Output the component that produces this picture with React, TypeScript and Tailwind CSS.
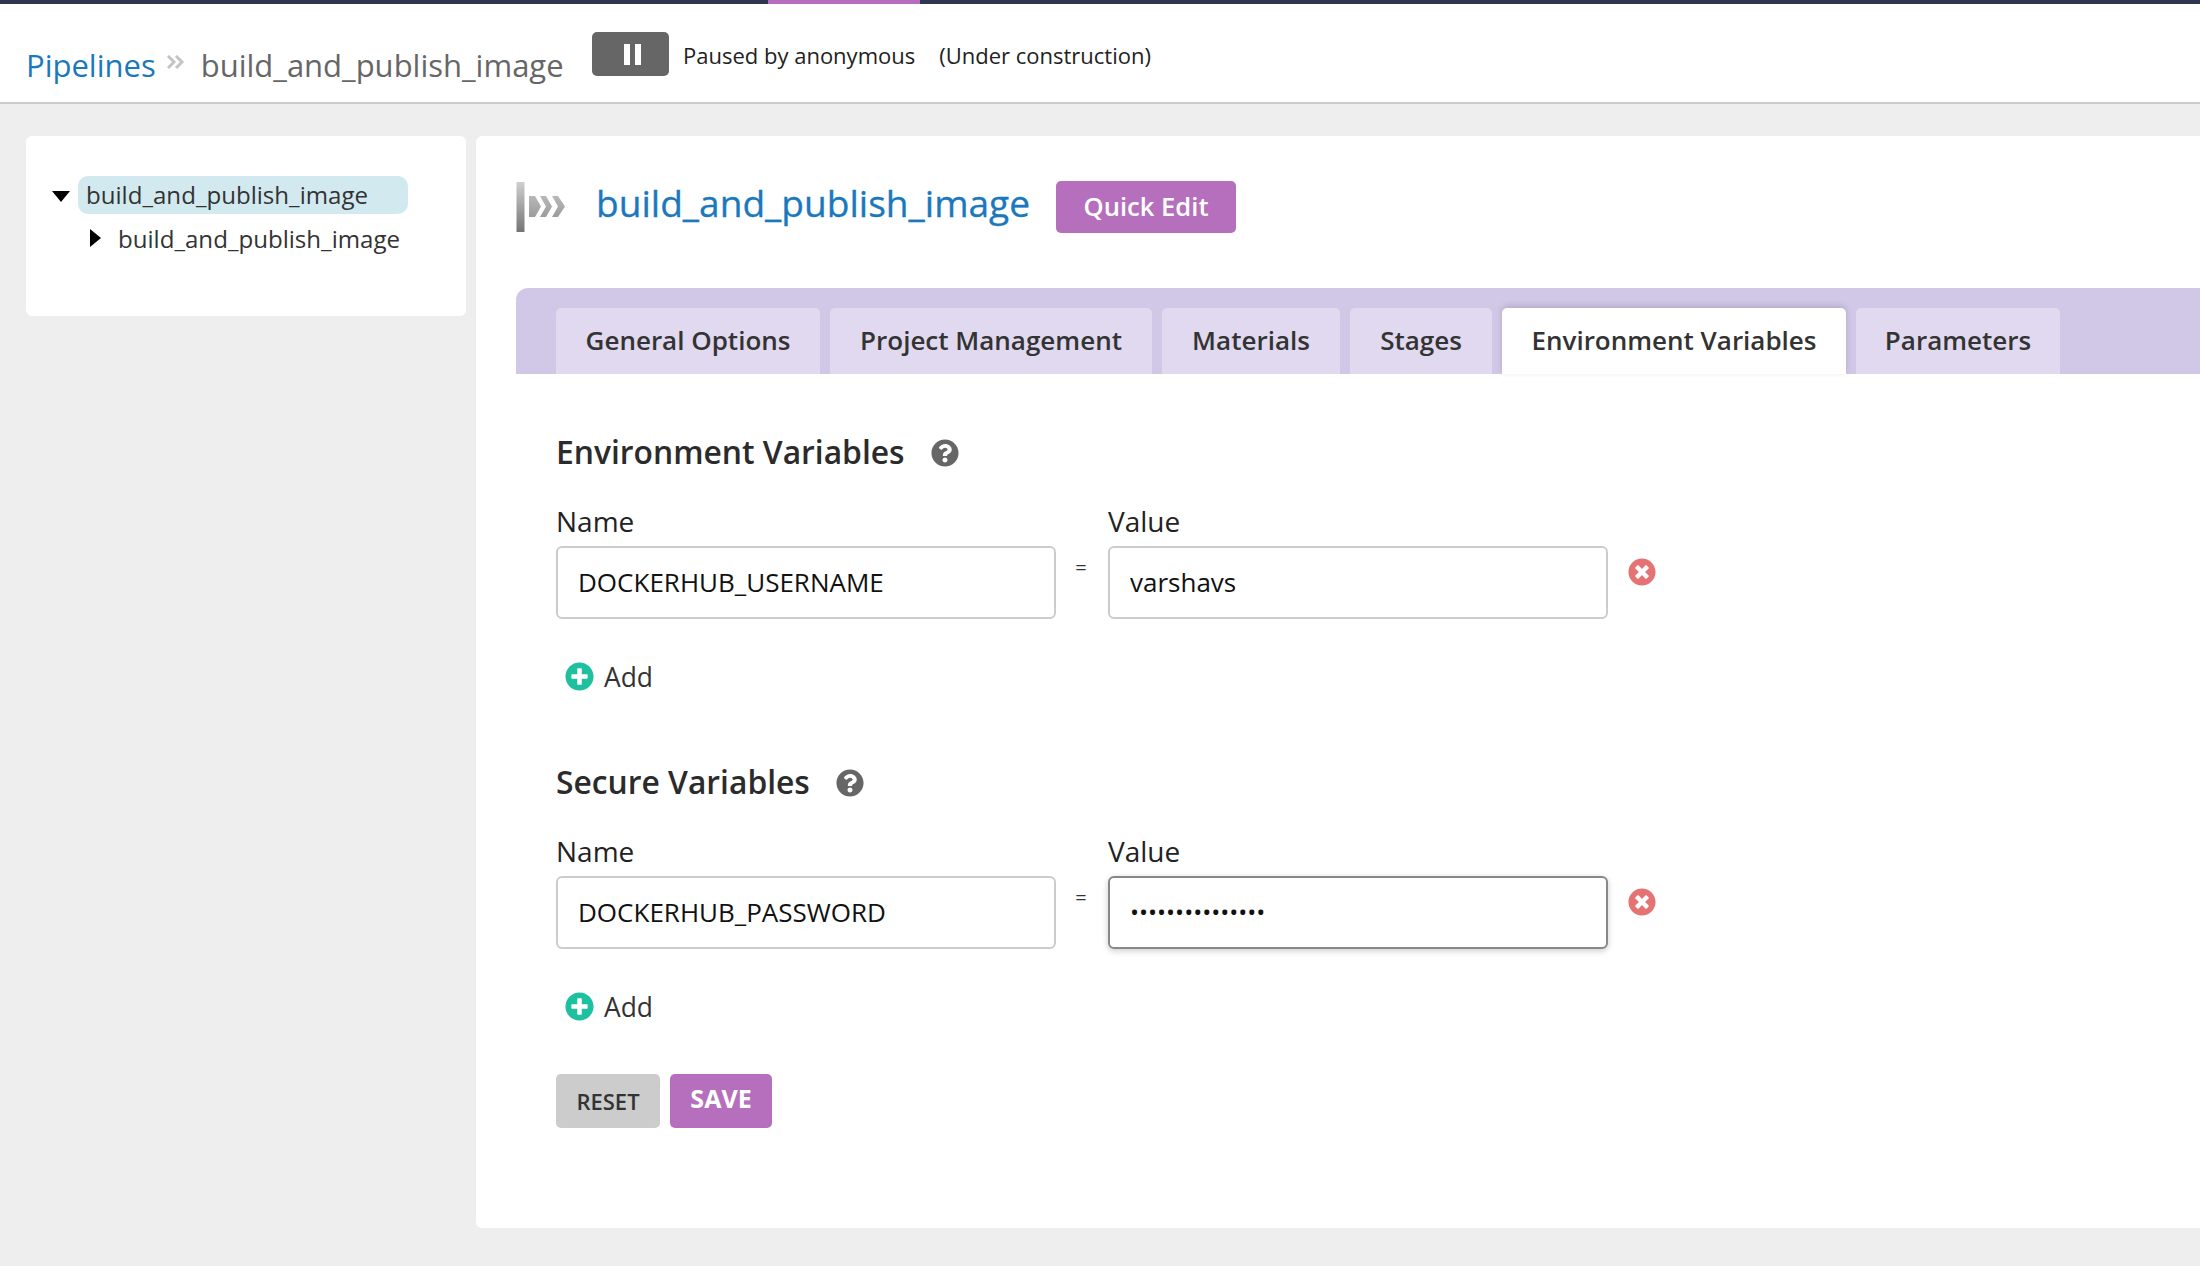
import React from 'react';
import { FaQuestionCircle, FaTimesCircle, FaPlusCircle } from 'react-icons/fa';

const tabs = ['General Options', 'Project Management', 'Materials', 'Stages', 'Environment Variables', 'Parameters'];
const tabWidths = ['w-[264px]', 'w-[322px]', 'w-[178px]', 'w-[142px]', 'w-[344px]', 'w-[204px]'];

function PipelineIcon() {
  return (
    <svg width="50" height="50" viewBox="0 0 50 50" className="shrink-0">
      <defs>
        <linearGradient id="bar" x1="0" y1="0" x2="0" y2="1">
          <stop offset="0" stopColor="#cfcfcf" />
          <stop offset="1" stopColor="#757575" />
        </linearGradient>
        <linearGradient id="chev" x1="0" y1="0" x2="0" y2="1">
          <stop offset="0" stopColor="#b8b8b8" />
          <stop offset="1" stopColor="#9c9c9c" />
        </linearGradient>
        <filter id="soft" x="-10%" y="-10%" width="120%" height="120%">
          <feGaussianBlur stdDeviation="0.6" />
        </filter>
      </defs>
      <rect x="0.5" y="0" width="8" height="50" fill="url(#bar)" filter="url(#soft)" />
      <path
        d="M13 14h6l6 10.5-6 10.5h-6z M24 14h6l6 10.5-6 10.5h-6l6-10.5z M36 14h6l7 10.5-7 10.5h-6l6-10.5z"
        fill="url(#chev)"
        filter="url(#soft)"
      />
    </svg>
  );
}

function VariableBlock({ title, name, value, secret }: { title: string; name: string; value: string; secret?: boolean }) {
  return (
    <div>
      <div className="flex items-center h-[28px]">
        <h2 className="-mt-[2px] text-[31.8px] leading-[28px] font-semibold text-[#2b2b2b]">{title}</h2>
        <FaQuestionCircle className="ml-[26px] text-[#666] text-[28px]" />
      </div>
      <div className="mt-[38px] grid grid-cols-[500px_52px_500px_auto]">
        <label className="h-[41px] text-[28px] leading-[32px] text-[#222]">Name</label>
        <div />
        <label className="h-[41px] text-[28px] leading-[32px] text-[#222]">Value</label>
        <div />
        <input
          readOnly
          value={name}
          className="h-[73px] w-full rounded-[6px] border-2 border-[#ccc] bg-white px-[20px] pb-[2px] text-[26px] text-[#111] outline-none"
        />
        <div className="pt-[8px] pr-[2px] text-center text-[20px] leading-[28px] text-[#333]">=</div>
        <input
          readOnly
          type={secret ? 'password' : 'text'}
          value={value}
          className={`h-[73px] w-full rounded-[6px] border-2 bg-white px-[20px] pb-[2px] text-[#111] outline-none ${
            secret ? 'border-[#888] text-[24px] shadow-[0_2px_6px_rgba(0,0,0,0.2)]' : 'border-[#ccc] text-[26px]'
          }`}
        />
        <div className="pl-[20px] pt-[12px]">
          <FaTimesCircle className="text-[#e57373] text-[28px]" />
        </div>
      </div>
      <div className="mt-[43px] ml-[9px] flex items-center h-[29px]">
        <FaPlusCircle className="text-[#1fc0a0] text-[29px]" />
        <span className="ml-[10px] pt-[2px] text-[26.4px] leading-[29px] text-[#333]">Add</span>
      </div>
    </div>
  );
}

export default function App() {
  return (
    <div className="min-h-[1266px] w-[2200px] overflow-hidden bg-[#eeeeee] font-['Open_Sans',sans-serif]">
      {/* top strip */}
      <div className="flex h-[4px]">
        <div className="w-[768px] bg-[#2f3650]" />
        <div className="w-[152px] bg-[#b56fbd]" />
        <div className="flex-1 bg-[#2f3650]" />
      </div>

      {/* header */}
      <div className="flex h-[100px] items-start border-b-2 border-[#ccc] bg-white pl-[26px]">
        <div className="mt-[39px] flex w-[566px] items-center text-[31px] leading-[44px]">
          <span className="text-[#1a78be]">Pipelines</span>
          <svg width="18" height="14" viewBox="0 0 18 14" className="ml-[11px] -mt-[6px] shrink-0">
            <path d="M1 1l6 6-6 6M9 1l6 6-6 6" fill="none" stroke="#c4c4c4" strokeWidth="3" />
          </svg>
          <span className="ml-[16px] text-[#666]">build_and_publish_image</span>
        </div>
        <div className="mt-[28px] flex h-[44px] w-[77px] items-center justify-center gap-[5px] rounded-[5px] bg-[#666] pl-[3px]">
          <div className="h-[21px] w-[6px] bg-white" />
          <div className="h-[21px] w-[6px] bg-white" />
        </div>
        <div className="mt-[37px] ml-[14px] text-[22px] leading-[28px] text-[#222]">Paused by anonymous</div>
        <div className="mt-[37px] ml-[24px] text-[22px] leading-[28px] text-[#222]">(Under construction)</div>
      </div>

      <div className="flex gap-[10px] pl-[26px] pt-[32px]">
        {/* sidebar */}
        <div className="h-[180px] w-[440px] shrink-0 rounded-[6px] bg-white pl-[26px] pt-[40px]">
          <div className="flex items-center">
            <svg width="18" height="11" viewBox="0 0 18 11" className="mt-[2px] shrink-0">
              <path d="M0 0h18L9 11z" fill="#000" />
            </svg>
            <div className="ml-[8px] flex h-[38px] w-[330px] items-center rounded-[10px] bg-[#d2e9f0] pl-[8px] text-[24.1px] text-[#333]">
              build_and_publish_image
            </div>
          </div>
          <div className="mt-[5px] flex h-[38px] items-center pl-[38px]">
            <svg width="11" height="18" viewBox="0 0 11 18" className="shrink-0">
              <path d="M0 0l11 9-11 9z" fill="#000" />
            </svg>
            <span className="ml-[17px] mt-[2px] text-[24.1px] text-[#333]">build_and_publish_image</span>
          </div>
        </div>

        {/* main panel */}
        <div className="h-[1092px] flex-1 rounded-l-[6px] bg-white pl-[40px] pt-[46px]">
          <div className="flex h-[50px] items-center">
            <PipelineIcon />
            <span className="ml-[30px] -mt-[8px] text-[37.1px] leading-[50px] text-[#1a78be] [-webkit-text-stroke:0.3px_#1a78be]">
              build_and_publish_image
            </span>
            <button className="ml-[26px] h-[52px] w-[180px] rounded-[5px] bg-[#b56fbd] text-[25.6px] font-semibold text-white">
              Quick Edit
            </button>
          </div>

          <div className="mt-[56px] flex h-[86px] gap-[10px] rounded-tl-[12px] bg-[#d1c7e7] pl-[40px] pt-[20px]">
            {tabs.map((tab, i) => (
              <div
                key={tab}
                className={`flex h-[66px] items-center justify-center rounded-t-[5px] pb-[2px] text-[26px] font-semibold text-[#333] ${tabWidths[i]} ${
                  tab === 'Environment Variables' ? 'bg-white shadow-[0_-2px_6px_rgba(0,0,0,0.15)]' : 'bg-[#e0d9ef]'
                }`}
              >
                {tab}
              </div>
            ))}
          </div>

          <div className="pl-[40px] pt-[65px]">
            <VariableBlock title="Environment Variables" name="DOCKERHUB_USERNAME" value="varshavs" />
            <div className="mt-[78px]">
              <VariableBlock title="Secure Variables" name="DOCKERHUB_PASSWORD" value="aaaaaaaaaaaaaaa" secret />
            </div>
            <div className="mt-[53px] flex gap-[10px]">
              <button className="h-[54px] w-[104px] rounded-[5px] bg-[#ccc] text-[22px] font-semibold text-[#333]">RESET</button>
              <button className="h-[54px] w-[102px] rounded-[5px] bg-[#b56fbd] pb-[4px] text-[25px] font-bold text-white">SAVE</button>
            </div>
          </div>
        </div>
      </div>
    </div>
  );
}
